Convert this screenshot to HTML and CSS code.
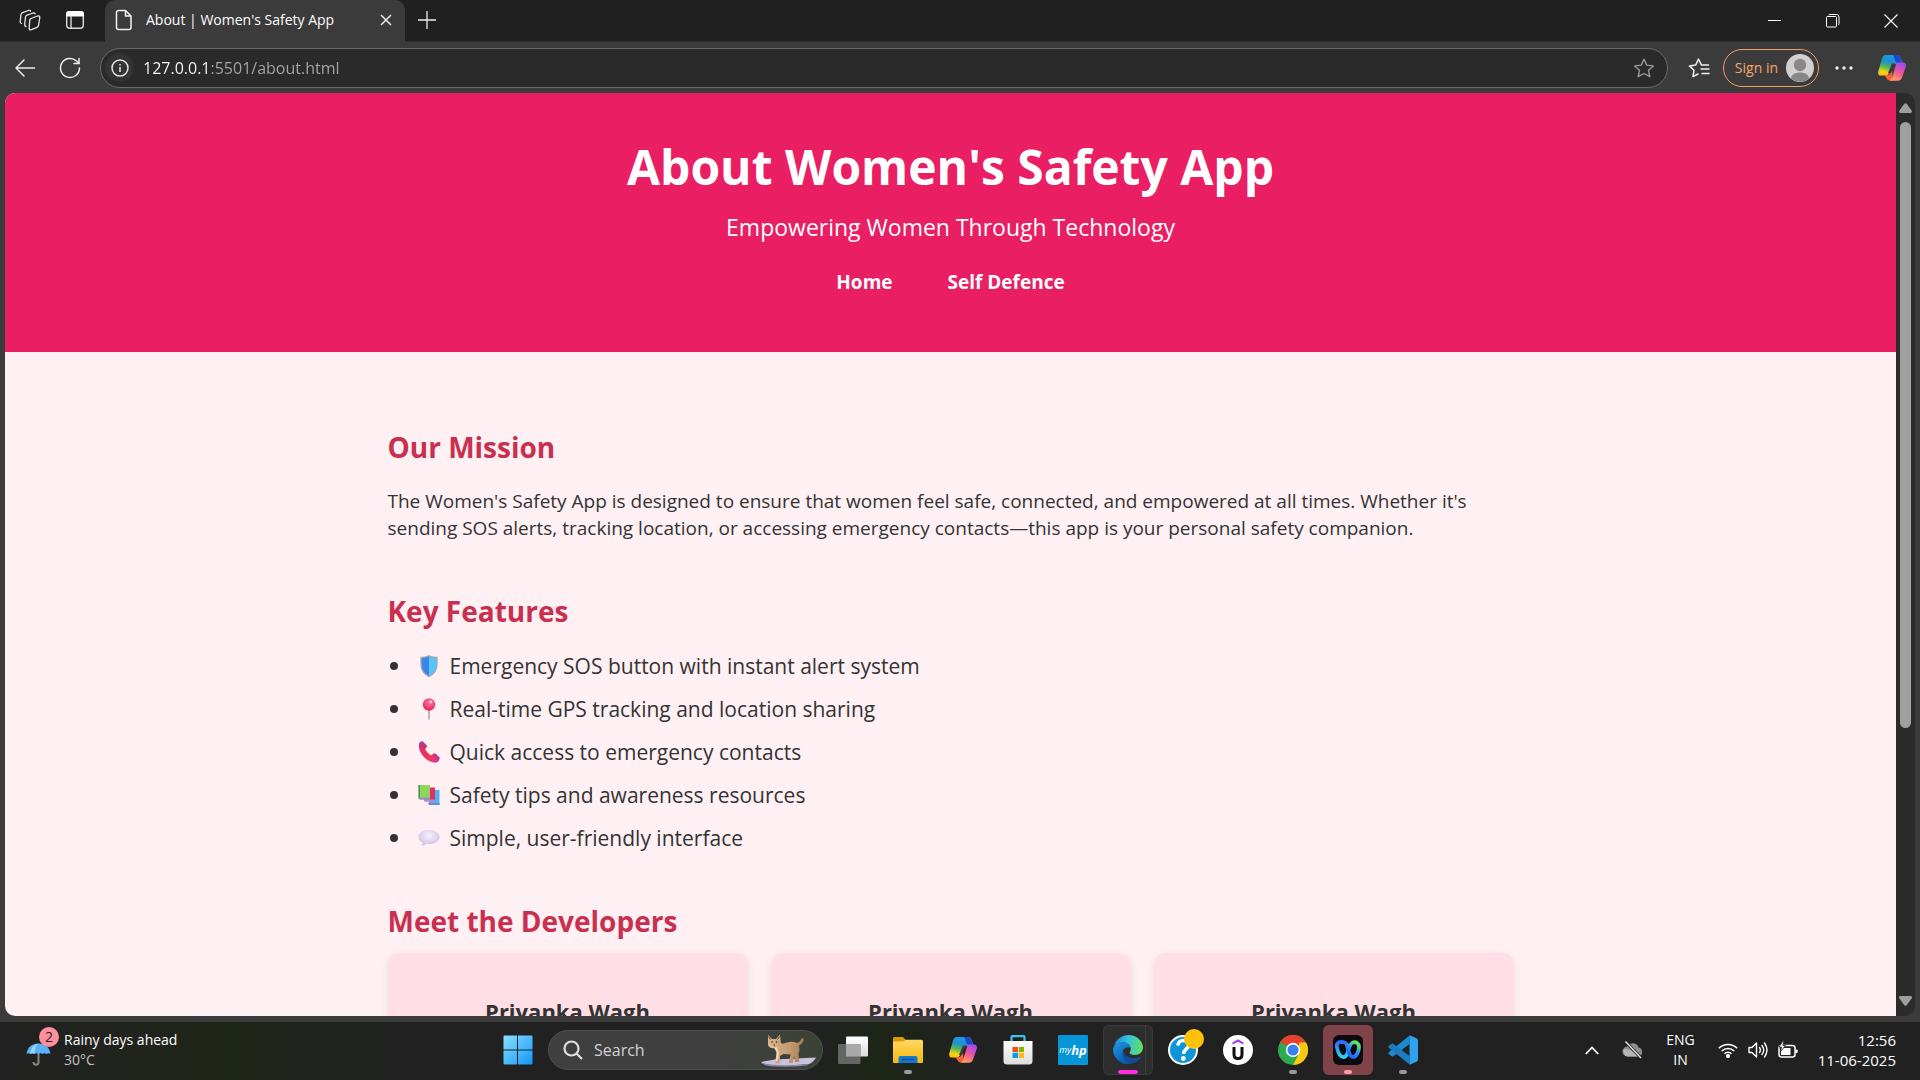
FILE: index.html
```html
<!DOCTYPE html>
<html lang="en">
<head>
<meta charset="utf-8">
<title>About | Women's Safety App</title>
<link rel="stylesheet" href="styles.css">
</head>
<body>
<svg class="defs" width="0" height="0" aria-hidden="true">
  <defs>
    <linearGradient id="cpA" x1="0.6" y1="0" x2="0.3" y2="1"><stop offset="0" stop-color="#1b9df0"/><stop offset=".35" stop-color="#1f8fd0"/><stop offset=".6" stop-color="#52b45c"/><stop offset=".85" stop-color="#f0d410"/><stop offset="1" stop-color="#ffc20e"/></linearGradient>
    <linearGradient id="cpB" x1="0.7" y1="0" x2="0.3" y2="1"><stop offset="0" stop-color="#a04bf0"/><stop offset=".5" stop-color="#ee5499"/><stop offset="1" stop-color="#ffa35c"/></linearGradient>
    <linearGradient id="winG" gradientUnits="userSpaceOnUse" x1="0" y1="0" x2="30" y2="30"><stop offset="0" stop-color="#8be4ff"/><stop offset="1" stop-color="#0f93fb"/></linearGradient>
    <linearGradient id="folderG" x1="0" y1="0" x2="0" y2="1"><stop offset="0" stop-color="#ffd765"/><stop offset="1" stop-color="#f9b90c"/></linearGradient>
    <linearGradient id="edgeA" x1="0" y1="0.4" x2="1" y2="0.5"><stop offset="0" stop-color="#1b86d8"/><stop offset=".45" stop-color="#35c1e0"/><stop offset="1" stop-color="#62e05a"/></linearGradient>
    <linearGradient id="edgeB" x1="0" y1="0" x2="0.7" y2="1"><stop offset="0" stop-color="#1b9be8"/><stop offset="1" stop-color="#0c4fa0"/></linearGradient>
    <linearGradient id="webexA" x1="0" y1="0" x2="0" y2="1"><stop offset="0" stop-color="#2b6bff"/><stop offset="1" stop-color="#2fd3f2"/></linearGradient>
    <linearGradient id="webexB" x1="0" y1="1" x2="0.6" y2="0"><stop offset="0" stop-color="#2352ff"/><stop offset=".6" stop-color="#2b8ef0"/><stop offset="1" stop-color="#5fe36a"/></linearGradient>
    <linearGradient id="phoneG" x1="0" y1="0" x2="1" y2="1"><stop offset="0" stop-color="#b04099"/><stop offset=".3" stop-color="#ea2c5c"/><stop offset=".7" stop-color="#f03a5e"/><stop offset="1" stop-color="#d634b4"/></linearGradient>
    <radialGradient id="pinG" cx=".55" cy=".3" r=".7"><stop offset="0" stop-color="#ff7aa8"/><stop offset="1" stop-color="#e3265c"/></radialGradient>
    <radialGradient id="bubbleG" cx=".5" cy=".35" r=".65"><stop offset="0" stop-color="#f6f1fa"/><stop offset="1" stop-color="#cdbfe2"/></radialGradient>
    <linearGradient id="whiteG" x1="0" y1="0" x2="0" y2="1"><stop offset="0" stop-color="#ffffff"/><stop offset="1" stop-color="#dcdcdc"/></linearGradient>
    <linearGradient id="catG" x1="0" y1="0" x2="1" y2="0"><stop offset="0" stop-color="#d9b48e"/><stop offset=".6" stop-color="#c49a70"/><stop offset="1" stop-color="#a87c56"/></linearGradient>
    <symbol id="copilot" viewBox="0 0 28 26">
      <path d="M8 0h11c2 0 3 1 3.600 3L25 9h-7c-3 0-4 1-5 4l-2 5c-.8 2-2 2.500-4 2.500H3C.5 20.500-.3 18.500.4 16L4 3.500C4.800 1 6 0 8 0z" fill="url(#cpA)"/>
      <path d="M15 0h4c2 0 3 1 3.600 3L24 8h-5c-2-1-2-4-4-8z" fill="#1b49c8"/>
      <path d="M6 20h5l3-5 1 10.500h-3c-2 0-3-1-3.500-2.500z" fill="#f4633a"/>
      <path d="M20 7.500h5c2.500 0 3.400 2 2.700 4.500L24 22.500c-.8 2.300-2 3.200-4 3.200h-9c2-.4 2.800-1.700 3.400-3.700l3.300-11.500c.5-2 1-3 2.300-3z" fill="url(#cpB)"/>
      <path d="M14 8.500h3l-4 9.500h-3z" fill="#3b3b3b"/>
    </symbol>
  </defs>
</svg>

<div class="window">
  <div class="titlebar">
    <button class="strip-btn" aria-label="Workspaces"><svg width="22" height="22" viewBox="0 0 22 22" fill="none" stroke="#e6e6e6" stroke-width="1.300" stroke-linejoin="round" stroke-linecap="round"><path d="M12 9.500 18.500 7q2.300-.5 2.300 1.500l-1.300 8q-.3 1.200-1.500 1.800L12.500 20.700q-2.600.6-2.300-1.500l.5-8q.2-1.200 1.300-1.700z"/><path d="M7 17.500q-1.500-.3-1.300-2l.8-7.500q.2-1.300 1.500-1.900L14 4q1.700-.4 2.100.8"/><path d="M2.500 14.500Q1 14 1.200 12.300L2 5.500Q2.200 4.200 3.500 3.600L9.500 1.500q1.600-.4 2 .6"/></svg></button>
    <button class="strip-btn" aria-label="Tab actions"><svg width="20" height="20" viewBox="0 0 20 20"><rect x="1.700" y="1.700" width="16.600" height="16.600" rx="3" fill="none" stroke="#ddd" stroke-width="1.400"/><path d="M1 6.500V4a3 3 0 0 1 3-3h12a3 3 0 0 1 3 3v2.500z" fill="#fff"/><path d="M6 6v12" stroke="#ddd" stroke-width="1.400"/></svg></button>
    <div class="tab">
      <svg width="18" height="22" viewBox="0 0 18 22" fill="none" stroke="#f2f2f2" stroke-width="1.500" stroke-linejoin="round"><path d="M3.500 1.500h7l5.500 5.500v11.500a2 2 0 0 1-2 2H3.500a2 2 0 0 1-2-2v-15a2 2 0 0 1 2-2z"/><path d="M10.500 1.500V7H16"/></svg>
      <span class="tab-title">About | Women's Safety App</span>
      <button class="tab-close" aria-label="Close tab"><svg width="12" height="12" viewBox="0 0 12 12" stroke="#eee" stroke-width="1.500"><path d="M1 1l10 10M11 1 1 11"/></svg></button>
    </div>
    <button class="new-tab" aria-label="New tab"><svg width="18" height="18" viewBox="0 0 18 18" stroke="#eee" stroke-width="1.300"><path d="M9 0v18M0 9h18"/></svg></button>
    <div class="controls">
      <button aria-label="Minimize"><svg width="14" height="14" viewBox="0 0 14 14" stroke="#fff" stroke-width="1"><path d="M0 6.500h13"/></svg></button>
      <button aria-label="Restore"><svg width="14" height="14" viewBox="0 0 14 14" fill="none" stroke="#fff" stroke-width="1"><rect x=".5" y="2.500" width="10" height="10.500" rx="1"/><path d="M2.500 1 Q3 .5 4 .5h6.500a2.500 2.500 0 0 1 2.500 2.500v6.500q0 1-.8 1.500"/></svg></button>
      <button aria-label="Close"><svg width="14" height="14" viewBox="0 0 14 14" stroke="#fff" stroke-width="1.100"><path d="M.5.5l13 13M13.500.5l-13 13"/></svg></button>
    </div>
  </div>

  <div class="toolbar">
    <button class="strip-btn" aria-label="Back"><svg width="22" height="20" viewBox="0 0 22 20" fill="none" stroke="#eee" stroke-width="1.500" stroke-linecap="round" stroke-linejoin="round"><path d="M10 2 2 10l8 8M2 10h18.500"/></svg></button>
    <button class="strip-btn" aria-label="Refresh"><svg width="22" height="22" viewBox="0 0 22 22" fill="none" stroke="#eee" stroke-width="1.500" stroke-linecap="round" stroke-linejoin="round"><path d="M20.500 11a9.500 9.500 0 1 1-3-7l2.500 2.500"/><path d="M20 1.500v5h-5"/></svg></button>
    <div class="address">
      <button class="info" aria-label="Site information"><svg width="18" height="18" viewBox="0 0 18 18" fill="none" stroke="#e6e6e6" stroke-width="1.500"><circle cx="9" cy="9" r="8"/><path d="M9 8v5M9 5v1.600"/></svg></button>
      <input class="url" type="text" aria-label="Address" value="127.0.0.1:5501/about.html">
      <button class="plain" aria-label="Add to favorites"><svg width="22" height="20" viewBox="0 0 22 20" fill="none" stroke="#9a9a9a" stroke-width="1.400" stroke-linejoin="round"><path d="M11 1.200l2.800 5.900 6.500.8-4.800 4.400 1.300 6.400L11 15.500l-5.800 3.200 1.300-6.400L1.700 7.900l6.500-.8z"/></svg></button>
    </div>
    <button class="plain" aria-label="Favorites"><svg width="22" height="20" viewBox="0 0 22 20" fill="none" stroke="#eee" stroke-width="1.500" stroke-linejoin="round" stroke-linecap="round"><path d="M13.500 7.100 10.500 1 7.700 7.100l-6.300.8 4.600 4.400L5 18.600l5-2.600"/><path d="M14.500 7h6M13 11h8M14 15.500h7"/></svg></button>
    <button class="signin">Sign in<svg width="28" height="28" viewBox="0 0 28 28"><circle cx="14" cy="14" r="14" fill="#d2d0ce"/><circle cx="14" cy="11" r="6.200" fill="#8a8886"/><path d="M5 24.500c0-8 18-8 18 0a14 14 0 0 1-18 0z" fill="#8a8886"/></svg></button>
    <button class="plain" aria-label="Settings and more"><svg width="18" height="6" viewBox="0 0 18 6" fill="#eee"><circle cx="2" cy="3" r="1.700"/><circle cx="9" cy="3" r="1.700"/><circle cx="16" cy="3" r="1.700"/></svg></button>
    <button class="plain copilot-btn" aria-label="Copilot"><svg width="28" height="26"><use href="#copilot"/></svg></button>
  </div>

  <div class="viewport">
    <div class="page">
      <header class="hero">
        <h1>About Women's Safety App</h1>
        <p>Empowering Women Through Technology</p>
        <nav><a href="#">Home</a><a href="#">Self Defence</a></nav>
      </header>
      <main>
        <section>
          <h2>Our Mission</h2>
          <p class="copy">The Women's Safety App is designed to ensure that women feel safe, connected, and empowered at all times. Whether it's sending SOS alerts, tracking location, or accessing emergency contacts—this app is your personal safety companion.</p>
        </section>
        <section>
          <h2>Key Features</h2>
          <ul class="features">
            <li><svg width="22" height="22" viewBox="0 0 22 22"><path d="M11 .8c2.500 1.200 5 1.700 8 1.700v6.500c0 6-3 10-8 12.600C6 19 3 15 3 9V2.500c3 0 5.500-.5 8-1.700z" fill="#57c5fb"/><path d="M11 .8v20.800C6 19 3 15 3 9V2.500c3 0 5.500-.5 8-1.700z" fill="#3a86e8"/><path d="M11 .8c2.500 1.200 5 1.700 8 1.700v6.500c0 6-3 10-8 12.600C6 19 3 15 3 9V2.500c3 0 5.500-.5 8-1.700z" fill="none" stroke="#a8a4b8" stroke-width="1.300"/></svg>Emergency SOS button with instant alert system</li>
            <li><svg width="22" height="22" viewBox="0 0 22 22"><path d="M11 11v10.500" stroke="#a79fb0" stroke-width="1.500"/><circle cx="11" cy="6.500" r="6.200" fill="url(#pinG)"/><circle cx="13" cy="4" r="1.400" fill="#ffc5d8"/></svg>Real-time GPS tracking and location sharing</li>
            <li><svg width="22" height="22" viewBox="0 0 22 22"><path d="M1 2.500C2 .8 4 0 5 .5l4 4.200c.5.800-.8 2.400-2 3.200 1.500 3 3.500 5 6.500 6.500 1-1.500 2.700-2.600 3.700-2l4.300 4.200c1 2-1.500 4.900-4 5.100C9 21.500-.5 12 1 2.500z" fill="url(#phoneG)"/><path d="M4 .3 9 5 7 7.500 3 3zM17.500 12.200l4 4.300-1.800 2.700-5-4.500z" fill="#a03aa0" opacity=".6"/></svg>Quick access to emergency contacts</li>
            <li><svg width="22" height="22" viewBox="0 0 22 22"><path d="M11 6h10.500v14.500H11z" fill="#4cb4f5"/><path d="M10 19h11.500v2H11z" fill="#6c86dc"/><path d="M6 3.500h11v12.800H6z" fill="#e3305c"/><path d="M5.500 15.500H17v2.200H6.500z" fill="#b48ac8"/><path d="M.5 1H12v13H.5z" fill="#8fd45c"/><path d="M.5 1H2v14H.5z" fill="#3f9a58"/><path d="M.8 13.500H12v2.300H1.500z" fill="#9a8fc0"/></svg>Safety tips and awareness resources</li>
            <li><svg width="22" height="22" viewBox="0 0 22 22"><path d="M11 3c6 0 10.500 2.700 10.500 7s-4.500 7-10.500 7c-1 0-2-.1-3-.2-1 1.300-2.700 2-4.500 2 .8-.9 1.200-2 1-3C2 14.500.5 12.500.5 10c0-4.300 4.500-7 10.500-7z" fill="url(#bubbleG)"/></svg>Simple, user-friendly interface</li>
          </ul>
        </section>
        <section>
          <h2 class="tight">Meet the Developers</h2>
          <div class="team">
            <article class="card"><h3>Priyanka Wagh</h3></article>
            <article class="card"><h3>Priyanka Wagh</h3></article>
            <article class="card"><h3>Priyanka Wagh</h3></article>
          </div>
        </section>
      </main>
    </div>
    <div class="scrollbar">
      <svg width="13" height="10" viewBox="0 0 13 10" fill="#9f9f9f"><path d="M5.300.8q1.200-1 2.400 0l5 7q.8 2-1 2.200H1.300Q-.5 9.800.3 7.800z"/></svg>
      <div class="track"><div class="thumb"></div></div>
      <svg width="13" height="10" viewBox="0 0 13 10" fill="#9f9f9f"><path d="M5.300 9.200q1.200 1 2.400 0l5-7q.8-2-1-2.200H1.300Q-.5.200.3 2.200z"/></svg>
    </div>
  </div>
</div>

<footer class="taskbar">
  <button class="weather">
    <span class="umbrella">
      <svg width="26" height="26" viewBox="0 0 26 26"><path d="M12.500 11v11q0 2.800-2.500 2.800T7.500 22" fill="none" stroke="#8a8480" stroke-width="2"/><path d="M.5 14C1.500 7 6 3.500 12.500 3.500S23.500 7 24.500 14q-2-1.500-4 0-2-1.500-4 0-2-1.500-4 0-2-1.500-4 0-2-1.500-4 0-2-1.500-4 0z" fill="#58b0f5"/><path d="M8.500 14c0-5 1.500-9 4-10.500-5 1-8 5-8 10.500q2-1.500 4 0z" fill="#9ad4fb"/></svg>
      <span class="badge">2</span>
    </span>
    <span class="stack"><span>Rainy days ahead</span><span class="dim">30°C</span></span>
  </button>

  <div class="apps">
    <button class="app" aria-label="Start"><svg width="30" height="30" viewBox="0 0 30 30" fill="url(#winG)"><path d="M1.500.5H14v14H.5v-13a1 1 0 0 1 1-1zM15 .5h13.500a1 1 0 0 1 1 1v13H15zM.5 15.500H14v14H1.500a1 1 0 0 1-1-1zM15 15.500h14.500v13a1 1 0 0 1-1 1H15z"/></svg></button>
    <label class="search">
      <svg width="20" height="20" viewBox="0 0 20 20" fill="none" stroke="#dedede" stroke-width="2.200"><circle cx="8.500" cy="8.500" r="7"/><path d="M13.500 13.500 19 19"/></svg>
      <input type="text" placeholder="Search" aria-label="Search">
      <svg width="56" height="34" viewBox="0 0 56 34"><path d="M1 29l14-2.500 41-2q-3 5-7 6.500-20 2.500-40 .8-6-.6-8-2.800z" fill="#c9c3de"/><path d="M1 29.500q5 2 14 2.300 22 .6 34-.8l-2 1.500q-20 2-38 .6-6-.8-8-3.600z" fill="#8c8aa8"/><path d="M8 2l4 4h4l4-4.500.8 7.500c.4 2 1.700 2 4 1.200 5-2 9-2 12.200-.2l3-1.500c1-1.500 1-3 2-3.500h1.500v2.500c-1 2.500-2.500 4-4.500 5 .8 3.500.5 5.500-.5 8l.6 8.500h-4l-1-6.500-1.500 7.500h-4l2-8.500-7-.5-3.600 2v7.500h-5l1.500-9.500L15 15c-4 .8-6.500-.7-7-3z" fill="url(#catG)"/><path d="M9 11c1 3 5 4.500 8 3l2 6-1.500 8h-2L17 19l-3-4c-3 0-5-2-5-4z" fill="#ead7c0"/><circle cx="12" cy="9" r=".8" fill="#3a2a18"/><circle cx="16.500" cy="9" r=".8" fill="#3a2a18"/><path d="M14.300 11v2M8.500 3.500l2 3M19.500 3.500l-2 3M42.500 5h1.800" stroke="#6a4428" stroke-width="1"/></svg>
    </label>
    <button class="app" aria-label="Task view"><svg width="30" height="28" viewBox="0 0 30 28"><path d="M8 1.500a1 1 0 0 1 1-1h20a1 1 0 0 1 1 1v18a1 1 0 0 1-1 1H9a1 1 0 0 1-1-1z" fill="url(#whiteG)"/><rect x="0" y="8" width="22.500" height="20" rx="1" fill="#6e6e6e" opacity=".88"/><path d="M8 8h14.500v12.500H8z" fill="#a9a9a9"/></svg></button>
    <button class="app running" aria-label="File Explorer"><svg width="30" height="28" viewBox="0 0 30 28"><path d="M0 2.500A1.500 1.500 0 0 1 1.500 1h8.500l3 3v4H0z" fill="#d99a06"/><path d="M0 5.500h10l3-1.800h15.500A1.500 1.500 0 0 1 30 5.200V26a1 1 0 0 1-1 1H1a1 1 0 0 1-1-1z" fill="url(#folderG)"/><path d="M5.500 27v-5a2 2 0 0 1 2-2h15a2 2 0 0 1 2 2v5z" fill="#1478d0"/><path d="M9 23.500h12.500" stroke="#0c4f96" stroke-width="1.500"/></svg></button>
    <button class="app" aria-label="Copilot"><svg width="28" height="26"><use href="#copilot"/></svg></button>
    <button class="app" aria-label="Microsoft Store"><svg width="30" height="30" viewBox="0 0 30 30"><path d="M8.500 6V2q0-.8.800-.8h11.400q.8 0 .8.800v4" fill="none" stroke="#3cc0f3" stroke-width="2.200"/><path d="M0.500 6h29v20a3.500 3.500 0 0 1-3.500 3.500H4A3.500 3.500 0 0 1 .5 26z" fill="url(#whiteG)"/><path d="M9.500 12H15v5H9.500z" fill="#f04e1f"/><path d="M15.800 12h5.200v5h-5.200z" fill="#7fb900"/><path d="M9.500 17.800H15V23H9.500z" fill="#00a2ed"/><path d="M15.800 17.800h5.200V23h-5.200z" fill="#fcb813"/></svg></button>
    <button class="app" aria-label="myHP"><span class="myhp">my<b>hp</b></span></button>
    <button class="app active" aria-label="Microsoft Edge"><svg width="30" height="30" viewBox="0 0 30 30"><path d="M1 11C3 4 9 0 15.500 0 23.500 0 30 6 30 12.500c0 4.500-3.500 7.500-8 7.500-3.500 0-5.500-1.200-5.500-2.300 0-.8 1.300-1.500 1.300-4C17.800 10 14 7.500 9.500 7.500 5.500 7.500 2.500 9 1 11z" fill="url(#edgeA)"/><path d="M0 15c0-4.500 4-8 9-8 5 0 8.500 2.800 8.700 6.200-1-.8-2.200-1.200-3.400-1-3.800.7-5 4-4.500 7 .8 5.300 6 9.300 12 8.300A15 15 0 0 1 0 15z" fill="url(#edgeB)"/><path d="M10 16c-.8 2-.5 4.500.8 7 2.200 3.800 6.700 5.500 11 4.500 2.500-1 4.700-2.800 6-4.800.5-.8-.2-1.200-1-.8-6.500 3-14.500.5-16.800-5.900z" fill="#0f4d9c"/></svg></button>
    <button class="app" aria-label="Help"><svg class="help" width="36" height="36" viewBox="0 0 36 36"><circle cx="15" cy="21" r="15" fill="#fff"/><circle cx="15" cy="21" r="13" fill="#0c96d8"/><path d="M9.800 16.500c.5-7 11-6.300 10.700-.2-.3 4-4.900 4-4.900 8.700" fill="none" stroke="#fff" stroke-width="3.600"/><circle cx="15.300" cy="29.500" r="2.400" fill="#fff"/><circle cx="26" cy="10" r="10" fill="#ffc20a"/></svg></button>
    <button class="app" aria-label="Udemy"><svg width="30" height="30" viewBox="0 0 30 30"><circle cx="15" cy="15" r="15" fill="#fff"/><path d="M9.500 9.500v-2L15 4.300l5.500 3.200v2L15 6.800z" fill="#a435f0"/><path d="M11 12v7.500q0 4 4 4t4-4V12" fill="none" stroke="#111" stroke-width="3"/></svg></button>
    <button class="app running" aria-label="Google Chrome"><svg width="30" height="30" viewBox="0 0 30 30"><circle cx="15" cy="15" r="15" fill="#2da94f"/><path d="M2 7.500A15 15 0 0 1 28 7.500L21 15H9z" fill="#e8402f"/><path d="M28 7.500A15 15 0 0 1 15 30l6-11.500V7.500z" fill="#fdc90f"/><path d="M2 7.500 9 18.500l6-6z" fill="#2da94f"/><circle cx="15" cy="15" r="7.200" fill="#fff"/><circle cx="15" cy="15" r="5.600" fill="#3b82f0"/></svg></button>
    <button class="app attention" aria-label="Webex"><svg width="30" height="30" viewBox="0 0 30 30"><rect width="30" height="30" rx="6" fill="#0b0b0d"/><path d="M15.500 13C14.500 9.500 12.500 7 9.500 7" stroke="#3b6bff" stroke-width="3.500" fill="none" stroke-linecap="round"/><path d="M9 7C5 6.500 3 9 4 12.500c1 5 3 9.500 6.500 9.500 2.500 0 4-3 5-7.500" fill="none" stroke="url(#webexA)" stroke-width="3.800" stroke-linecap="round"/><path d="M14 10.500c1.500 6 2.500 11.500 6 11.500 3.500 0 6-6 6-10 0-3.500-3-5.500-6-4.500-2.500.8-3.500 3.500-4.500 7" fill="none" stroke="url(#webexB)" stroke-width="3.800" stroke-linecap="round"/></svg></button>
    <button class="app running" aria-label="Visual Studio Code"><svg width="30" height="30" viewBox="0 0 30 30"><path d="M21.500.5v8.500L4.500 21.800l-4-2.800v-1.500z" fill="#1f8ad2"/><path d="M21.500 29.500V21L4.500 8.200l-4 2.800v1.500z" fill="#1a7cc2"/><path d="M21.500.3 28.500 3.300q1.500.8 1.500 2.200v19q0 1.500-1.500 2.200l-7 3z" fill="#2ea3f0"/></svg></button>
  </div>

  <div class="tray">
    <button class="tray-btn" aria-label="Show hidden icons"><svg width="14" height="9" viewBox="0 0 14 9" fill="none" stroke="#fff" stroke-width="1.800"><path d="M.8 8 7 1.500 13.200 8"/></svg></button>
    <button class="tray-btn cloud" aria-label="OneDrive"><svg width="22" height="18" viewBox="0 0 22 18"><path d="M5.500 15.500a5 5 0 0 1 0-10 6 6 0 0 1 11 1 4.600 4.600 0 0 1 0 9z" fill="#8e8e8e"/><path d="M2 8q8 0 17 7.500H5.500A5 5 0 0 1 2 8z" fill="#b5b5b5"/><path d="M3.500.5 19 17" stroke="#202020" stroke-width="3"/><path d="M3.500.5 19 17" stroke="#eee" stroke-width="1.300"/></svg></button>
    <button class="stack lang"><span>ENG</span><span>IN</span></button>
    <button class="status" aria-label="Network, volume and battery">
      <svg width="20" height="16" viewBox="0 0 20 16" fill="none" stroke="#fff" stroke-width="1.500"><path d="M.8 6.200a13 13 0 0 1 18.400 0M3.700 9a9 9 0 0 1 12.600 0M6.500 11.800a5 5 0 0 1 7 0"/><circle cx="10" cy="14" r="1.300" fill="#fff"/></svg>
      <svg width="20" height="18" viewBox="0 0 20 18" fill="none" stroke="#fff" stroke-width="1.400" stroke-linejoin="round" stroke-linecap="round"><path d="M1 6.500h3L8.500 2v14L4 11.500H1z"/><path d="M11.500 6.500q1.800 2.500 0 5M14 4.500q3.500 4.500 0 9M16.500 2q5 7 0 14"/></svg>
      <svg width="20" height="18" viewBox="0 0 20 18" fill="none"><rect x="1" y="4.500" width="16" height="11.500" rx="2.500" stroke="#fff" stroke-width="1.500"/><path d="M17.500 8.500h1.200q1 0 1 .8v2q0 .8-1 .8h-1.200z" fill="#fff"/><path d="M3 14V7h9.500v7z" fill="#fff"/><path d="M5 0 1 6h2.500L2.500 10.500 7.500 4.500H4.800L6 0z" fill="#fff" stroke="#202020" stroke-width=".8"/></svg>
    </button>
    <button class="stack clock"><span>12:56</span><span>11-06-2025</span></button>
  </div>
</footer>
</body>
</html>
```
FILE: styles.css
```css
* { box-sizing: border-box; margin: 0; padding: 0; }

body {
  display: flex;
  flex-direction: column;
  height: 100vh;
  overflow: hidden;
  background: #202020;
  font-family: "Open Sans", "Noto Sans", sans-serif;
  color: #fff;
}

button, input {
  border: 0;
  background: none;
  color: inherit;
  font: inherit;
  outline: 0;
}

button {
  display: flex;
  align-items: center;
  justify-content: center;
  flex: none;
}

svg { display: block; flex: none; }
.defs { position: absolute; }

/* Browser window */
.window {
  flex: 1;
  min-height: 0;
  display: flex;
  flex-direction: column;
  background: #3b3b3b;
}

.titlebar {
  display: flex;
  height: 42px;
  padding-left: 7px;
  background: #202020;
  border-bottom: 1px solid #2e2e2e;
}

.strip-btn { width: 45px; height: 40px; }

.tab {
  display: flex;
  align-items: center;
  width: 300px;
  height: 42px;
  margin-left: 8px;
  padding: 0 9px 2px 10px;
  background: #3b3b3b;
  border-radius: 10px 10px 0 0;
}
.tab-title { flex: 1; margin-left: 13px; font-size: 14px; line-height: 20px; }
.tab-close { width: 20px; height: 20px; }
.new-tab { width: 44px; height: 40px; }

.controls { display: flex; margin-left: auto; }
.controls button { width: 58px; height: 42px; }

.toolbar {
  display: flex;
  align-items: center;
  height: 51px;
  padding: 0 14px 0 2px;
}

.address {
  flex: 1;
  display: flex;
  align-items: center;
  height: 40px;
  margin: 0 20px 0 8px;
  padding: 0 12px 0 4px;
  border: 1px solid #6b6b6b;
  border-radius: 20px;
  background: #2a2a2a;
}
.info { width: 29px; height: 29px; border-radius: 50%; background: #333; }
.url {
  flex: 1;
  height: 30px;
  margin-left: 9px;
  font-size: 16px;
  color: transparent;
  background: linear-gradient(90deg, #fff 67px, #a6a6a6 67px);
  background-clip: text;
}

.signin {
  gap: 8px;
  height: 38px;
  margin: 0 16px 0 13px;
  padding: 0 4px 0 11px;
  border: 1px solid #f0a063;
  border-radius: 19px;
  color: #f5a76c;
  font-size: 14px;
}
.copilot-btn { margin-left: 25px; }

.viewport {
  flex: 1;
  min-height: 0;
  display: flex;
  margin: 0 5px 5px;
  border-radius: 10px;
  overflow: hidden;
  background: #2b2b2b;
}

/* Page */
.page {
  flex: 1;
  overflow: hidden;
  background: #fff0f3;
  color: #333;
}

.hero {
  padding: 42px 20px 57px;
  background: #e91e63;
  color: #fff;
  text-align: center;
}
.hero h1 { font-size: 48px; line-height: 64px; }
.hero p { margin-top: 12px; font-size: 23px; line-height: 32px; }
.hero nav { display: flex; justify-content: center; gap: 55px; margin-top: 26px; }
.hero a { color: #fff; font-size: 19px; font-weight: 700; line-height: 26px; text-decoration: none; }

main { max-width: 1126px; margin: 0 auto; padding-top: 76px; }
section { margin-bottom: 50px; }
h2 { margin-bottom: 22px; color: #c9304f; font-size: 28px; line-height: 38px; }
h2.tight { margin-bottom: 13px; }
.copy { font-size: 19px; line-height: 27px; }

.features { display: flex; flex-direction: column; gap: 15px; list-style: none; font-size: 21px; line-height: 28px; }
.features li { display: flex; align-items: center; gap: 10px; }
.features li::before {
  content: "";
  width: 8px;
  height: 8px;
  margin: 0 10px 0 2px;
  border-radius: 50%;
  background: #333;
}

.team { display: grid; grid-template-columns: repeat(3, 1fr); gap: 23px; }
.card {
  min-height: 260px;
  padding: 43px 20px;
  border-radius: 12px;
  background: #ffdfe5;
  box-shadow: 0 2px 8px rgba(0, 0, 0, .08);
  text-align: center;
}
.card h3 { font-size: 22px; line-height: 30px; }

.scrollbar {
  display: flex;
  flex-direction: column;
  align-items: center;
  width: 19px;
  padding: 10px 0;
}
.track { flex: 1; padding: 9px 0; }
.thumb { width: 11px; height: 70%; border-radius: 6px; background: #9f9f9f; }

/* Taskbar */
.taskbar {
  display: grid;
  grid-template-columns: 1fr auto 1fr;
  align-items: center;
  height: 59px;
  padding: 0 0 2px 1px;
  border-top: 1px solid #3a3a3a;
  background: linear-gradient(90deg, #212121 0, #20241c 8%, #1e2617 12%, #202220 17%, #212121 28%, #212121 42%, #1d2517 46%, #212121 51%, #212121 100%);
  font-size: 14px;
  line-height: 20px;
}

.stack { display: flex; flex-direction: column; align-items: flex-start; }

.weather { justify-self: start; gap: 12px; padding-left: 25px; }
.umbrella { position: relative; padding-top: 6px; }
.badge {
  position: absolute;
  top: -7px;
  left: 13px;
  width: 20px;
  height: 20px;
  border-radius: 50%;
  background: #ff8f9c;
  color: #222;
  text-align: center;
}
.dim { color: #c4c4c4; }

.apps { display: flex; align-items: center; gap: 5px; }
.app { position: relative; width: 50px; height: 50px; border-radius: 6px; }
.app.running::after, .app.active::after, .app.attention::after {
  content: "";
  position: absolute;
  bottom: 1px;
  left: 21px;
  width: 8px;
  height: 4px;
  border-radius: 2px;
  background: #9a9a9a;
}
.app.active { background: #2d2d2d; box-shadow: inset 0 0 0 1px #3a3a3a; }
.app.active::after { left: 15px; width: 20px; background: #ff2fe0; }
.app.active::before {
  content: "";
  position: absolute;
  inset: 0 0 0 auto;
  width: 7px;
  border-left: 1px solid #3f3f3f;
  border-radius: 0 6px 6px 0;
}
.app.attention { background: #80434a; }
.app.attention::after { background: #ff99a4; }
.help { margin: -6px 0 0 6px; }

.myhp {
  display: flex;
  align-items: center;
  justify-content: center;
  width: 30px;
  height: 30px;
  border-radius: 1px;
  background: #0596d7;
  font-size: 9px;
  font-style: italic;
}
.myhp b { font-size: 13px; }

.search {
  display: flex;
  align-items: center;
  width: 275px;
  height: 40px;
  padding: 0 6px 0 14px;
  border: 1px solid #505050;
  border-radius: 20px;
  background: linear-gradient(90deg, #3f3f3f 60%, #3a4236);
}
.search input { flex: 1; min-width: 0; margin-left: 11px; font-size: 16px; }
.search input::placeholder { color: #d2d2d2; opacity: 1; }

.tray { display: flex; align-items: center; justify-self: end; padding-right: 24px; }
.cloud { margin-left: 23px; }
.lang { align-items: center; margin-left: 22px; }
.status { gap: 10px; margin-left: 23px; }
.clock { align-items: flex-end; margin-left: 20px; font-size: 15px; }
```
